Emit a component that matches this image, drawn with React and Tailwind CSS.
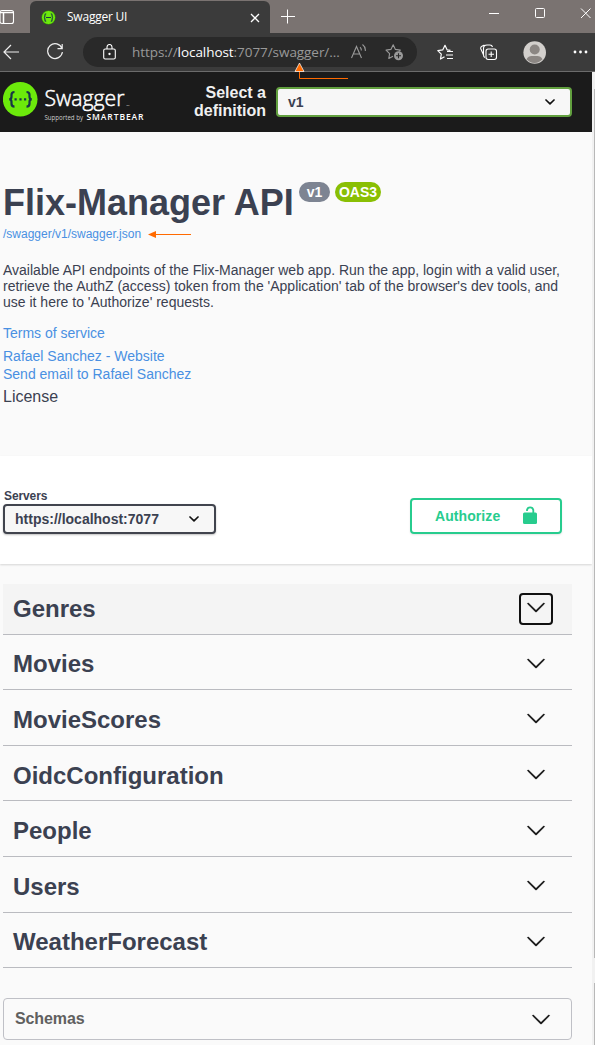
import React from "react";

const tags = ["Genres", "Movies", "MovieScores", "OidcConfiguration", "People", "Users", "WeatherForecast"];

function Chevron() {
  return (
    <svg width="20" height="20" viewBox="0 0 20 20" fill="#111" stroke="#111" strokeWidth=".3">
      <path d="M17.418 6.109c.272-.268.709-.268.979 0s.271.701 0 .969l-7.908 7.83c-.27.268-.707.268-.979 0l-7.908-7.83c-.27-.268-.27-.701 0-.969s.709-.268.979 0L10 13.25z" />
    </svg>
  );
}

function SelectArrow() {
  return (
    <svg width="10" height="6" viewBox="0 0 10 6" fill="none" stroke="#111" strokeWidth="1.7" strokeLinecap="round" strokeLinejoin="round">
      <path d="M1 1l4 3.8L9 1" />
    </svg>
  );
}

function TabStrip() {
  return (
    <div className="flex h-[33px] bg-[#7a7371] font-['Open_Sans','Noto_Sans',sans-serif]">
      <svg className="mt-[9px] w-[30px] shrink-0" width="30" height="16" fill="none" stroke="#fff" strokeWidth="1.1">
        <rect x="0" y="1.500" width="13.500" height="13" rx="2" />
        <path d="M0 3.500h14M3.500 3.500v11" strokeWidth="1.500" />
      </svg>
      <div className="mt-px flex h-8 w-[240px] shrink-0 items-center rounded-t-md bg-[#3b3b3b] pl-[11px]">
        <svg className="shrink-0" width="15" height="15" viewBox="0 0 15 15" fill="none" stroke="#173647">
          <circle cx="7.5" cy="7.5" r="7" fill="#6cea0b" stroke="#244918" strokeWidth=".6" />
          <path d="M5.2 3.8q-1.3 0-1.3 1.3v1q0 1.4-1 1.4 1 0 1 1.4v1q0 1.3 1.3 1.3M9.8 3.8q1.3 0 1.3 1.3v1q0 1.4 1 1.4-1 0-1 1.4v1q0 1.3-1.3 1.3M5 7.5h5" strokeWidth="1.1" />
        </svg>
        <span className="ml-[11px] w-[183px] shrink-0 text-[12px] tracking-[-0.22px] text-white">Swagger UI</span>
        <svg className="mt-0.5 shrink-0" width="10" height="10" stroke="#fff" strokeWidth="1.3"><path d="M1 1l8 8M9 1l-8 8" /></svg>
      </div>
      <svg className="ml-[11px] mt-[9px] shrink-0" width="14" height="15" stroke="#fff" strokeWidth="1"><path d="M0 7.5h14M6.5 .5v14" /></svg>
      <svg className="ml-auto shrink-0" width="110" height="32" fill="none" stroke="#fff" strokeWidth="1">
        <path d="M4 13.5h10" />
        <rect x="50.5" y="8.5" width="9" height="9" rx="1" />
        <path d="M96 8.5l9.5 9.5M105.500 8.5l-9.500 9.5" />
      </svg>
    </div>
  );
}

function Toolbar() {
  return (
    <div className="flex h-[39px] items-center border-b border-[#6b6b6b] bg-[#3b3b3b] font-['Open_Sans','Noto_Sans',sans-serif]">
      <svg className="ml-[3px] shrink-0" width="16" height="16" fill="none" stroke="#eee" strokeWidth="1.2"><path d="M16 8H1M8 1L1 8l7 7" /></svg>
      <svg className="ml-[27px] shrink-0" width="18" height="18" fill="none" stroke="#eee" strokeWidth="1.2">
        <path d="M16 5.500A7.400 7.400 0 1 0 16.400 9M16.200 1v4.700h-4.700" />
      </svg>
      <div className="ml-[19px] flex h-[30px] w-[334px] shrink-0 items-center rounded-full bg-[#292929] pl-5">
        <svg className="shrink-0" width="13" height="16" fill="none" stroke="#fff" strokeWidth="1.1">
          <rect x=".7" y="5" width="11.600" height="10" rx="1.500" /><path d="M4 5V3a2.500 2.500 0 0 1 5 0v2" /><circle cx="6.500" cy="10" r=".6" fill="#fff" />
        </svg>
        <div className="ml-4 w-[219px] whitespace-nowrap text-[13.500px] tracking-[-0.06px] text-[#999]">
          https://<span className="text-white">localhost</span>:7077/swagger/...
        </div>
        <svg className="shrink-0" width="16" height="18" fill="none" stroke="#999" strokeWidth="1.1">
          <path d="M.5 15L5.500 3.500 10.500 15M2.200 11h6.600M9 4.200q1.500 1.200 1.300 3.300M11.500 1.500q3.300 2.500 2.800 6.500" />
        </svg>
        <svg className="ml-[18px] shrink-0" width="20" height="20" fill="none" stroke="#999" strokeWidth="1.100" strokeLinejoin="round">
          <path d="M8 14.300l-4.200 2.200.8-4.900L1 8.100l4.900-.7L8.200 2.800l2.200 4.600 4.900.7-1.300 1.300" />
          <circle cx="13.500" cy="13.800" r="4.500" fill="#999" stroke="none" /><path d="M11 13.800h5M13.500 11.300v5" stroke="#292929" />
        </svg>
      </div>
      <svg className="ml-5 shrink-0" width="17" height="17" fill="none" stroke="#fff" strokeWidth="1.200" strokeLinejoin="round">
        <path d="M7.500 12.700l-4 2.300.8-4.800L.8 6.600l4.900-.7L8 1.300l2.200 4.600 3.300.5M10 7.500h6M9 11h7M10 14.500h6" />
      </svg>
      <svg className="ml-[26px] shrink-0" width="18" height="18" fill="none" stroke="#fff" strokeWidth="1.100">
        <rect x="6" y="6" width="10.500" height="10.500" rx="2.200" /><path d="M8.500 11.200h5.500M11.200 8.500V14M3.800 12.500L.9 6q-.7-2 1-2.800l2.500-1.100M5 14.500Q3.500 14 3.500 12V5.500q0-3.500 3.500-3.500h3q2 0 2.500 2" />
      </svg>
      <svg className="ml-[25px] shrink-0" width="23" height="23">
        <circle cx="11.700" cy="11.500" r="11.300" fill="#d2cfcc" /><circle cx="11.700" cy="8.500" r="5" fill="#8b8683" />
        <path d="M3.500 18.300q2-3.300 5-3.300h6q3 0 5 3.300-3.300 3.700-8 3.700t-8-3.700" fill="#8b8683" />
      </svg>
      <svg className="ml-[27px] shrink-0" width="15" height="4" fill="#fff"><circle cx="2" cy="2" r="1.400" /><circle cx="7.500" cy="2" r="1.400" /><circle cx="13" cy="2" r="1.400" /></svg>
    </div>
  );
}

function SwaggerLogo() {
  return (
    <svg className="shrink-0" width="150" height="44" viewBox="0 0 150 44">
      <circle cx="17.200" cy="18.300" r="17.300" fill="#6cea0b" />
      <g fill="none" stroke="#173647" strokeWidth="2.200">
        <path d="M11.500 11q-3 0-3 2.800v2q0 2.500-2.300 2.500 2.300 0 2.300 2.500v2q0 2.800 3 2.800M23.500 11q3 0 3 2.800v2q0 2.500 2.300 2.500-2.300 0-2.300 2.500v2q0 2.800-3 2.800" />
        <path d="M11.500 18.300h2.200M16.400 18.300h2.200M21 18.300h2.200" />
      </g>
      <g fill="#fff" fontFamily="Open Sans, sans-serif">
        <text x="41.500" y="25.300" fontSize="22.500" fontWeight="300" stroke="#fff" strokeWidth=".5" textLength="80" lengthAdjust="spacingAndGlyphs">Swagger</text>
        <text x="123.500" y="25.300" fontSize="2">TM</text>
        <text x="41.500" y="39.200" fontSize="6.500" fill="#ccc" textLength="38.500" lengthAdjust="spacingAndGlyphs">Supported by</text>
        <text x="83.500" y="39.200" fontSize="8.500" fontWeight="600" textLength="57" lengthAdjust="spacing">SMARTBEAR</text>
      </g>
    </svg>
  );
}

function Topbar() {
  return (
    <header className="relative flex h-[60px] bg-[#1b1b1b] pl-[3px]">
      <div className="mt-[9px]"><SwaggerLogo /></div>
      <div className="mt-3 w-[113px] text-right text-[16px] font-bold leading-[18px] text-[#f0f0f0]">Select a<br />definition</div>
      <div className="ml-[10px] mt-[15px] flex h-[30px] w-[296px] items-center justify-between rounded border-2 border-[#62a03f] bg-[#f7f7f7] pl-[10px] pr-[15px] text-[14px] font-bold text-[#3b4151]">
        v1 <SelectArrow />
      </div>
      <svg className="absolute left-[294px] top-[-10px]" width="56" height="18">
        <path d="M5.500 8v8.500H54" fill="none" stroke="#ff6a00" /><path d="M5.500 1L10 9.500H1z" fill="#ff6a00" stroke="#fff" strokeWidth=".7" />
      </svg>
    </header>
  );
}

function Info() {
  return (
    <section className="h-[324px] pl-[3px] pt-[50px] text-[14px] text-[#4990e2]">
      <div className="flex h-[41px] text-[#3b4151]">
        <h1 className="w-[296px] whitespace-nowrap text-[36px] font-bold leading-[42px]">Flix-Manager API</h1>
        <div className="flex h-5 gap-[5px] text-[14px] font-bold leading-5 text-white">
          <span className="w-[31px] rounded-full bg-[#7d8492] text-center">v1</span>
          <span className="w-[46px] rounded-full bg-[#89bf04] text-center">OAS3</span>
        </div>
      </div>
      <div className="mt-[3px] flex h-4 items-center">
        <a className="w-[145px] text-[12px]">/swagger/v1/swagger.json</a>
        <svg width="43" height="8"><path d="M7 4.500h36" stroke="#ff6a00" /><path d="M0 4.500L8 1v7z" fill="#ff6a00" /></svg>
      </div>
      <p className="mt-5 w-[570px] whitespace-nowrap leading-4 text-[#3b4151]">
        Available API endpoints of the Flix-Manager web app. Run the app, login with a valid user,<br />
        retrieve the AuthZ (access) token from the 'Application' tab of the browser's dev tools, and<br />
        use it here to 'Authorize' requests.
      </p>
      <div className="mt-[15px] leading-4">Terms of service</div>
      <div className="mt-[6px] leading-[18px]">Rafael Sanchez - Website<br />Send email to Rafael Sanchez</div>
      <div className="mt-[5px] text-[16px] leading-[18px] text-[#3b4151]">License</div>
    </section>
  );
}

function Servers() {
  return (
    <section className="flex h-[108px] justify-between bg-white pl-[3px] pr-[30px] shadow-[0_1px_2px_rgba(0,0,0,0.15)]">
      <div className="pt-8 text-[#3b4151]">
        <div className="h-4 pl-px text-[12px] font-bold leading-4 tracking-[-0.1px]">Servers</div>
        <div className="flex h-[30px] w-[213px] items-center justify-between rounded border-2 border-[#41444e] bg-[#f7f7f7] pl-[10px] pr-[15px] text-[14px] font-bold shadow-[0_1px_2px_rgba(0,0,0,0.25)]">
          https://localhost:7077 <SelectArrow />
        </div>
      </div>
      <button className="mt-[42px] flex h-9 w-[152px] items-center rounded border-2 border-[#27cc8e] pl-[23px] text-[14px] font-bold text-[#27cc8e] shadow-[0_1px_2px_rgba(0,0,0,0.1)]">
        <span className="w-[88px] text-left tracking-[0.08px]">Authorize</span>
        <svg className="-mt-0.5" width="15" height="18" fill="#27cc8e"><rect y="6.500" width="14" height="11.500" rx="1.500" /><path d="M4 5V4a3.200 3.200 0 0 1 6.300 0v4" fill="none" stroke="#27cc8e" strokeWidth="1.800" /></svg>
      </button>
    </section>
  );
}

function Tag({ name, active }) {
  return (
    <div className={`mb-[5px] flex h-[50.600px] items-center justify-between border-b border-[#babbc0] pl-[10px] pr-[19px] ${active ? "bg-[#f4f4f4]" : ""}`}>
      <h3 className="text-[24px] font-bold leading-7 text-[#3b4151]">{name}</h3>
      <div className={`flex h-8 w-[34px] items-center justify-center rounded border-2 ${active ? "border-[#111] pb-1" : "border-transparent pb-[3px]"}`}><Chevron /></div>
    </div>
  );
}

export default function App() {
  return (
    <div className="h-[1045px] w-[595px] overflow-hidden bg-[#fafafa] font-['Liberation_Sans',Arial,sans-serif]">
      <TabStrip />
      <Toolbar />
      <div className="flex h-[973px]">
        <main className="w-[592px] shrink-0">
          <Topbar />
          <Info />
          <Servers />
          <div className="pl-[3px] pr-5 pt-5">
            {tags.map((name, i) => <Tag key={name} name={name} active={i === 0} />)}
            <div className="mt-[30px] flex h-[42px] items-center justify-between rounded border border-[#bfc0c6] pl-[11px] pr-5 text-[16px] font-bold text-[#606060]">
              <span className="tracking-[-0.1px]">Schemas</span> <Chevron />
            </div>
          </div>
        </main>
        <div className="flex w-[3px] flex-col items-end bg-[#f1f1f1] pt-[17px]">
          <div className="h-[869px] w-px bg-[#b8b8b8]" />
          <div className="mt-[25px] h-[62px] w-px bg-[#b8b8b8]" />
        </div>
      </div>
    </div>
  );
}
